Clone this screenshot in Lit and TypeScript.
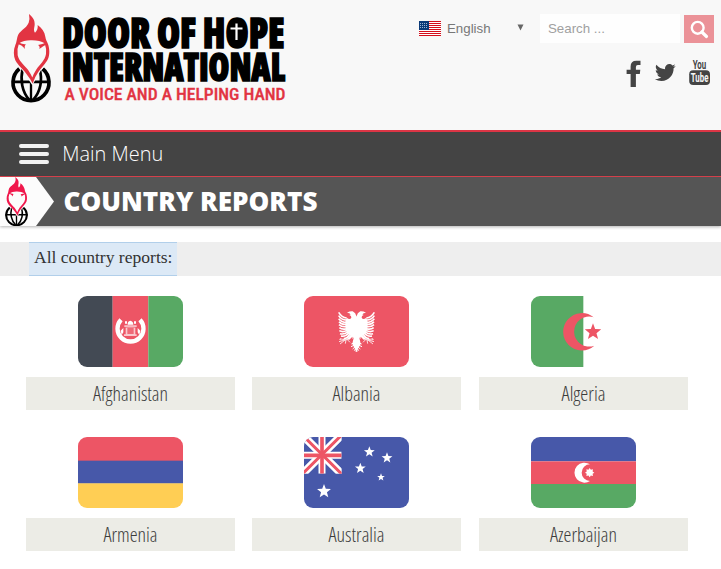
import { LitElement, html, svg, css } from "lit";
import { customElement } from "lit/decorators.js";

const RED = "#ed5565";
const BLUE = "#4758a9";
const GREEN = "#58a964";

/** A single line of text set to a fixed measure; x/y are its start and baseline. */
const line = (s: string, x: number, y: number, w: number, cls: string) =>
  svg`<text class=${cls} x=${x} y=${y} textLength=${w} lengthAdjust="spacingAndGlyphs">${s}</text>`;

const star = (cx: number, cy: number, r: number, fill = "#fff", n = 5, k = 0.42) => {
  const pts = Array.from({ length: n * 2 }, (_, i) => {
    const a = -Math.PI / 2 + (i * Math.PI) / n;
    const q = i % 2 ? r * k : r;
    return `${(cx + q * Math.cos(a)).toFixed(1)},${(cy + q * Math.sin(a)).toFixed(1)}`;
  });
  return svg`<polygon points=${pts.join(" ")} fill=${fill}></polygon>`;
};

/** Flame, dove head and globe. */
const mark = (cls: string, colour: string, bg: string) => html`
  <svg class=${cls} viewBox="33 44 120 262" preserveAspectRatio="none">
    <g fill="none" stroke="#000" stroke-width="11">
      <path d="M58 207A54 54 0 1 0 128 207"></path>
      <path d="M68 208C60 240 66 276 88 300M119 208C128 240 122 276 99 300M37 246H150" stroke-width="8"></path>
      <path d="M93 246V300" stroke-width="7"></path>
    </g>
    <path d="M43 165Q46 190 68 213L97 256L122 213Q146 190 148 165Z" fill=${bg}></path>
    <path fill=${colour} d="M87 44C99 54 105 63 104 76C103 86 100 92 105 100C112 94 114 86 113 77C126 86 134 98 136 112C137 121 141 126 145 136C150 154 149 172 140 185C133 196 122 207 114 218Q105 230 98 251Q92 238 82 226C72 211 54 198 46 182C40 168 40 150 46 136C50 128 50 121 52 113C56 94 79 88 86 70Q90 58 87 44Z"></path>
    <path fill=${bg} d="M57 131Q72 121 96 122Q120 122 134 131Q140 147 138 163C135 182 120 194 109 209Q101 221 97 233Q92 222 84 210C70 193 57 185 53 167Q50 148 57 131Z"></path>
    <path fill=${colour} d="M54 128Q66 133 78 135Q72 139 75 148Q64 135 54 134ZM138 129Q128 134 114 136Q121 140 118 148Q131 139 139 135Z"></path>
  </svg>`;

const feather = (d: string) => svg`<path d=${d}></path>`;
const eagleHalf = svg`
  <path fill="#fff" stroke="none" d="M160 62H158Q155 50 146 46Q138 45 129 50Q137 51 140 55L136 57Q143 59 142 65Q138 72 129 66Q124 70 124 84L125 100Q128 115 139 117Q134 123 128 130L136 131L145 122L146 130L150 123Q146 136 145 144L158 168H160Z"></path>
  ${["M128 66Q113 64 104 49", "M127 72Q112 72 104 59", "M127 79Q113 79 104 68", "M127 86Q113 86 105 77", "M127 92Q114 94 105 86",
     "M128 98Q115 102 106 95", "M129 103Q117 110 106 104", "M132 107Q120 117 108 113", "M135 110Q124 123 111 120", "M138 114Q130 128 119 128"].map(feather)}
  <g stroke-width="2.4">${["M133 129L105 137", "M125 132L108 128M122 133L108 144M126 132L124 143M130 131L138 139M112 132L106 130"].map(feather)}</g>
  <g stroke-width="3">${["M156 138L142 144", "M156 145L141 152", "M156 150L146 159", "M156 156L151 164"].map(feather)}</g>`;

const flags: Record<string, unknown> = {
  Afghanistan: svg`
    <rect width="104" height="213" fill="#434a54"></rect>
    <rect x="104" width="107" height="213" fill=${RED}></rect>
    <rect x="211" width="104" height="213" fill=${GREEN}></rect>
    <path d="M129 71A39 39 0 1 0 186 71" fill="none" stroke="#fff" stroke-width="13"></path>
    <g fill="#f9c9ce"><path d="M139 88H176V93H172V115H176V120H138V115H143V93H139Z"></path>
      <path d="M128 104L136 96V109L131 117ZM187 104L179 96V109L184 117Z" fill="#fff"></path></g>
    <path d="M149 86Q148 75 157 74Q166 75 166 86ZM141 76H147V83H141ZM168 76H174V83H168Z" fill="#fff"></path>
    <rect x="148" y="96" width="19" height="18" fill=${RED} opacity=".82"></rect>
    <path d="M142 94H173" stroke=${RED} stroke-width="2"></path>`,
  Albania: svg`
    <rect width="315" height="213" fill=${RED}></rect>
    <g fill="none" stroke="#fff" stroke-width="4.8">${eagleHalf}<g transform="matrix(-1 0 0 1 315 0)">${eagleHalf}</g></g>`,
  Algeria: svg`
    <rect width="157" height="213" fill=${GREEN}></rect>
    <path d="M188 64A56 56 0 1 0 190 149A45 45 0 1 1 188 64Z" fill=${RED}></path>
    ${star(186, 108, 26, RED)}`,
  Armenia: svg`
    <rect width="315" height="72" fill=${RED}></rect>
    <rect y="71" width="315" height="69" fill=${BLUE}></rect>
    <rect y="139" width="315" height="74" fill="#ffce54"></rect>`,
  Australia: svg`
    <rect width="315" height="213" fill=${BLUE}></rect>
    <svg width="113" height="110" viewBox="0 0 113 110">
      <path d="M-4 -5L117 115M112 -5L-9 115" stroke="#fff" stroke-width="24"></path>
      <path d="M54 0V110M0 55H113" stroke="#fff" stroke-width="21"></path>
      <path d="M-4 -5L117 115M112 -5L-9 115" stroke=${RED} stroke-width="9"></path>
      <path d="M54 0V110M0 55H113" stroke=${RED} stroke-width="11"></path>
    </svg>
    ${star(196, 45, 17)}${star(249, 63, 17)}${star(169, 94, 17)}${star(231, 121, 12)}${star(60, 163, 22)}`,
  Azerbaijan: svg`
    <rect width="315" height="73" fill=${BLUE}></rect>
    <rect y="73" width="315" height="68" fill=${RED}></rect>
    <rect y="141" width="315" height="72" fill=${GREEN}></rect>
    <path d="M177 82A30 30 0 1 0 177 132A25 25 0 1 1 177 82Z" fill="#fff"></path>
    ${star(176, 107, 14, "#fff", 8, 0.68)}`,
};

@customElement("country-card")
class CountryCard extends LitElement {
  static properties = { name: {}, measure: { type: Number } };
  declare name: string;
  declare measure: number;
  static styles = css`
    :host { display: flex; flex-direction: column; align-items: center; gap: 10px; width: 209px; }
    .flag { display: block; width: 105px; height: 71px; border-radius: 9px; }
    .label { width: 209px; height: 33px; background: #ecece6; display: block; }
    .name { font-family: "Open Sans", sans-serif; font-weight: 300; font-size: 19.5px; font-stretch: 75%; fill: #3c3c3c; }
  `;
  render() {
    return html`
      <svg class="flag" viewBox="0 0 315 213">${flags[this.name]}</svg>
      <svg class="label" viewBox="0 0 209 33">${line(this.name, (209 - this.measure) / 2, 24, this.measure, "name")}</svg>`;
  }
}

@customElement("app-root")
class AppRoot extends LitElement {
  static styles = css`
    :host { display: block; width: 721px; height: 569px; overflow: hidden; background: #fff; font-family: "Liberation Sans", Arial, sans-serif; }
    svg { display: block; flex: none; overflow: visible; }
    header { height: 130px; box-sizing: border-box; background: #f8f8f8; display: flex; justify-content: space-between; padding: 14px 7px 0 11px; }
    .brand { display: flex; gap: 13px; }
    .mark { width: 40px; height: 88px; }
    .words { width: 222px; height: 90px; }
    .big, .big2 { font-family: "Open Sans", sans-serif; font-weight: 800; font-stretch: 75%; fill: #000; stroke: #000; stroke-width: 1.6px; }
    .big { font-size: 42px; }
    .big2 { font-size: 38px; }
    .tag { font: 500 17.3px Roboto, sans-serif; font-stretch: 75%; fill: #e23442; stroke: #e23442; stroke-width: .3px; }
    .tools { display: flex; flex-direction: column; align-items: flex-end; gap: 16px; }
    .row { display: flex; align-items: flex-start; height: 29px; }
    .lang { display: flex; align-items: center; height: 29px; color: #777; font-size: 13.3px; width: 121px; }
    .us { width: 22px; height: 15px; margin-right: 6px; }
    .arrow { width: 7px; height: 7px; margin: 0 0 2px auto; padding-right: 16px; }
    .field { width: 140px; height: 29px; box-sizing: border-box; background: #fefefe; color: #a0a0a0; font-size: 13.3px; line-height: 29px; padding-left: 8px; }
    .go { width: 30px; height: 28px; margin: 1px 0 0 4px; background: #eb9298; }
    .social { width: 88px; height: 30px; }
    .yt { font: 700 12px Roboto, sans-serif; fill: #444; }
    .yt2 { font: 700 12.5px Roboto, sans-serif; fill: #f8f8f8; }
    nav { height: 44px; border-top: 2px solid #dc3545; border-bottom: 1px solid #e04450; background: #444; display: flex; align-items: center; padding-left: 19px; gap: 14px; }
    .burger { width: 30px; height: 20px; }
    .menu { width: 100px; height: 44px; }
    .menutext { font: 300 20px "Open Sans", sans-serif; fill: #fff; }
    .title { height: 49px; background: #555; display: flex; box-shadow: 0 1px 3px rgba(0,0,0,.3); }
    .tab { width: 54px; height: 49px; background: #fcfcfc; clip-path: polygon(0 0, 36px 0, 100% 50%, 36px 100%, 0 100%); padding-left: 5px; box-sizing: border-box; }
    .small { width: 23px; height: 49px; }
    .heading { width: 254px; height: 49px; margin-left: 10px; }
    .h1 { font: 800 25.8px "Open Sans", sans-serif; fill: #fff; }
    .crumbs { height: 34px; margin-top: 16px; background: #eee; padding-left: 29px; }
    .all { width: 148px; height: 34px; box-sizing: border-box; background: #dce9f6; border: solid #b1cfea; border-width: 1px 0; }
    .alltext { font: 16.7px "Liberation Serif", Georgia, serif; fill: #333; }
    main { display: grid; grid-template-columns: 226px 227px 209px; row-gap: 27px; padding: 20px 0 0 26px; }
  `;
  render() {
    const cards: [string, number][] = [
      ["Afghanistan", 75], ["Albania", 48], ["Algeria", 44],
      ["Armenia", 54], ["Australia", 56], ["Azerbaijan", 67],
    ];
    const stripes = [0, 2, 4, 6, 8, 10, 12, 14];
    return html`
      <header>
        <div class="brand">
          ${mark("mark", "#e23442", "#f8f8f8")}
          <svg class="words" viewBox="64 14 222 90">
            ${line("DOOR OF HOPE", 62, 48, 222.5, "big")}
            <rect x="229" y="22" width="15" height="22" rx="6"></rect>
            <path d="M236.500 23.500V40M230.500 28.500H242.500" stroke="#fff" stroke-width="2.200"></path>
            ${line("INTERNATIONAL", 62, 80.5, 223, "big2")}
            ${line("A VOICE AND A HELPING HAND", 64.5, 100, 221, "tag")}
          </svg>
        </div>
        <div class="tools">
          <div class="row">
            <div class="lang">
              <svg class="us" viewBox="0 0 22 15">
                <rect width="22" height="15" fill="#fff"></rect>
                ${stripes.map((y) => svg`<rect y=${y} width="22" height="1" fill="#d40f1c"></rect>`)}
                <rect width="10" height="9" fill="#0b3a78"></rect>
                <path d="M1 2.5H9M1 4.5H9M1 6.5H9" stroke="#9fb5d3" stroke-dasharray="1 1"></path>
              </svg>
              <span>English</span>
              <svg class="arrow" viewBox="0 0 7 7"><path d="M.5 .5H6.5L3.5 6.5Z" fill="#666"></path></svg>
            </div>
            <div class="field">Search ...</div>
            <svg class="go" viewBox="0 0 30 28"><circle cx="13.7" cy="12.8" r="5.9" fill="none" stroke="#fff" stroke-width="2.4"></circle><path d="M17.8 17L22.5 21.5" stroke="#fff" stroke-width="3.2" stroke-linecap="round"></path></svg>
          </div>
          <svg class="social" viewBox="626 59 88 30">
            <path fill="#444" d="M640.5 60.8V65H637.8Q635.9 65 635.9 67V69.8H640.3L639.8 74H635.9V87H630.6V74H626.6V69.8H630.6V66.5Q630.6 60.7 636.4 60.7Z"></path>
            <path fill="#444" transform="translate(654.8 62) scale(.87)" d="M24 4.6c-.9.4-1.8.7-2.8.8 1-.6 1.8-1.6 2.2-2.7-1 .6-2 1-3.1 1.2-2-2-5-2.1-7-.3-1.4 1.3-1.8 3-1.4 4.8-4.1-.2-7.7-2.2-10.1-5.2-1.3 2.2-.7 5.1 1.5 6.6-.8 0-1.6-.2-2.2-.6-.1 2.3 1.6 4.4 3.9 4.9-.7.2-1.5.2-2.2.1.6 2 2.4 3.4 4.6 3.4-2.1 1.6-4.7 2.3-7.3 2 2.2 1.4 4.8 2.2 7.5 2.2 9.1 0 14.3-7.7 14-14.6 1-.7 1.8-1.6 2.4-2.6z"></path>
            ${line("You", 692.7, 69.2, 13.5, "yt")}
            <rect x="689.2" y="70.3" width="20.8" height="14.6" rx="4" fill="#444"></rect>
            ${line("Tube", 690.8, 82.2, 17.6, "yt2")}
          </svg>
        </div>
      </header>
      <nav>
        <svg class="burger" viewBox="0 0 30 20"><path d="M2 2H28M2 10H28M2 18H28" stroke="#f2f2f2" stroke-width="4" stroke-linecap="round"></path></svg>
        <svg class="menu" viewBox="0 0 100 44">${line("Main Menu", -0.8, 29, 101, "menutext")}</svg>
      </nav>
      <div class="title">
        <div class="tab">${mark("small", "#f0184c", "#fcfcfc")}</div>
        <svg class="heading" viewBox="64 177 254 49">${line("COUNTRY REPORTS", 63.5, 210.7, 254, "h1")}</svg>
      </div>
      <div class="crumbs"><div class="all"><svg width="148" height="32" viewBox="0 0 148 32">${line("All country reports:", 5, 20, 138.5, "alltext")}</svg></div></div>
      <main>${cards.map(([n, w]) => html`<country-card .name=${n} .measure=${w}></country-card>`)}</main>`;
  }
}
